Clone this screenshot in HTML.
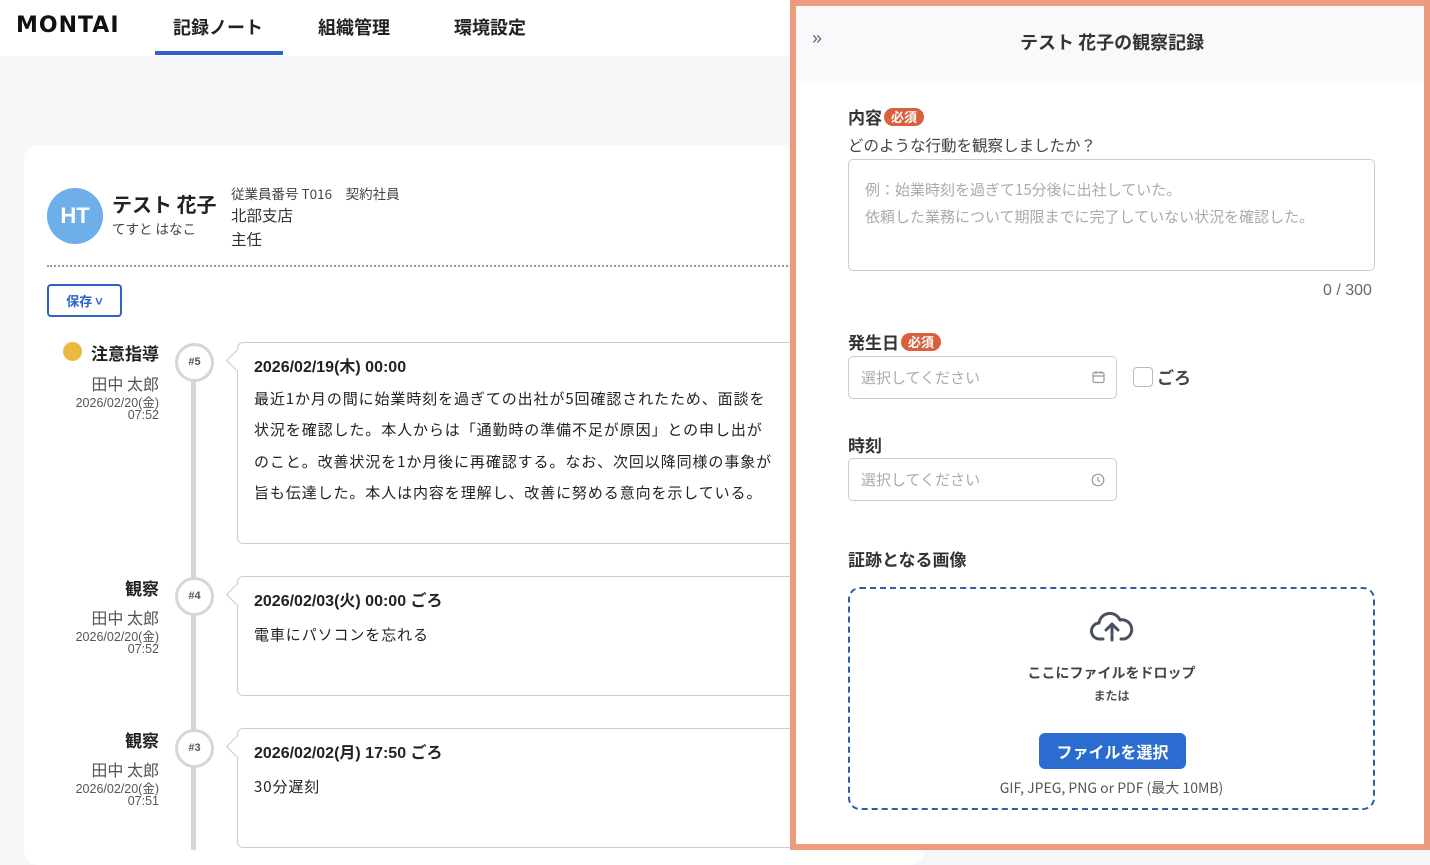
<!DOCTYPE html>
<html><head><meta charset="utf-8"><style>
*{box-sizing:border-box;margin:0;padding:0}
body{width:1430px;height:850px;overflow:hidden;background:#f6f7f9;font-family:"Liberation Sans","Noto Sans CJK JP",sans-serif;color:#222;position:relative}
.jp{font-family:"Noto Sans CJK JP",sans-serif}
.nav{position:absolute;left:0;top:0;width:1430px;height:56px;background:#fff}
.logo{position:absolute;left:16px;top:13px;font-size:22px;font-weight:bold;letter-spacing:1px;color:#111;font-family:"DejaVu Sans","Liberation Sans",sans-serif}
.tab{position:absolute;top:14px;font-size:18px;font-weight:bold;color:#222}
.uline{position:absolute;left:155px;top:51px;width:128px;height:4px;background:#2d63c8}
.card{position:absolute;left:24px;top:145px;width:900px;height:720px;background:#fff;border-radius:14px}
.av{position:absolute;left:47px;top:188px;width:56px;height:56px;border-radius:50%;background:#6eaee9;color:#fff;font-weight:bold;font-size:22px;text-align:center;line-height:56px}
.abs{position:absolute;white-space:nowrap}
.dots{position:absolute;left:47px;top:265px;width:745px;border-top:2px dotted #999}
.save{position:absolute;left:47px;top:284px;width:75px;height:33px;border:2px solid #2d63c8;border-radius:4px;color:#2d63c8;font-size:13px;font-weight:bold;text-align:center;line-height:29px}
.line{position:absolute;left:191px;top:360px;width:5px;height:490px;background:#d4d6dc}
.num{position:absolute;left:175px;width:39px;height:39px;border-radius:50%;border:3px solid #d4d6dc;background:#fff;font-size:11px;font-weight:bold;color:#555;text-align:center;line-height:33px}
.box{position:absolute;left:237px;width:600px;border:1.5px solid #c9ccd2;border-radius:6px;background:#fff}
.box:before{content:"";position:absolute;left:-9px;top:10px;width:14px;height:14px;background:#fff;border-left:1.5px solid #c9ccd2;border-bottom:1.5px solid #c9ccd2;transform:rotate(45deg)}
.bt{position:absolute;left:16px;top:10px;font-size:16px;font-weight:bold;white-space:nowrap}
.bd{position:absolute;left:16px;top:40px;font-size:15px;line-height:31.3px;white-space:nowrap;color:#222;letter-spacing:0.9px}
.type{position:absolute;right:1271px;font-size:17px;font-weight:bold;text-align:right}
.who{position:absolute;right:1271px;font-size:16px;color:#555;text-align:right}
.ts{position:absolute;right:1271px;font-size:12.5px;color:#555;text-align:right;line-height:12px}
.panel{position:absolute;left:790px;top:0;width:640px;height:850px;border:6px solid #ec9b7d;background:#fff}
.ph{position:absolute;left:0;top:0;width:628px;height:75px;background:#f7f9fb}
.lbl{position:absolute;left:52px;font-size:17px;font-weight:bold;color:#333}
.req{display:inline-block;background:#d9603e;color:#fff;font-size:13px;border-radius:9px;padding:0 7px;line-height:18px;vertical-align:2px;margin-left:2px}
.inp{position:absolute;left:52px;border:1.5px solid #c9ccd2;border-radius:5px;background:#fff}
.ph1{color:#aaa;font-size:15px}
</style></head><body>
<div class="nav">
<div class="logo">MONTAI</div>
<div class="tab jp" style="left:173px">記録ノート</div>
<div class="tab jp" style="left:318px">組織管理</div>
<div class="tab jp" style="left:454px">環境設定</div>
<div class="uline"></div>
</div>
<div class="card"></div>
<div class="av">HT</div>
<div class="abs jp" style="left:112px;top:189px;font-size:20px;font-weight:bold">テスト 花子</div>
<div class="abs jp" style="left:112px;top:218px;font-size:13.5px;color:#444">てすと はなこ</div>
<div class="abs jp" style="left:231px;top:183px;font-size:13.5px;color:#444">従業員番号 T016　契約社員</div>
<div class="abs jp" style="left:231px;top:204px;font-size:15.5px;color:#333">北部支店</div>
<div class="abs jp" style="left:231px;top:228px;font-size:15.5px;color:#333">主任</div>
<div class="dots"></div>
<div class="save jp">保存 ˅</div>
<div class="line"></div>

<div class="abs" style="left:63px;top:342px;width:19px;height:19px;border-radius:50%;background:#e9bb3c"></div>
<div class="type jp" style="top:340px">注意指導</div>
<div class="who jp" style="top:371px">田中 太郎</div>
<div class="ts" style="top:397px">2026/02/20(金)<br>07:52</div>
<div class="num" style="top:343px">#5</div>
<div class="box" style="top:342px;height:202px"><div class="bt">2026/02/19(木) 00:00</div><div class="bd jp">最近1か月の間に始業時刻を過ぎての出社が5回確認されたため、面談を<br>状況を確認した。本人からは「通勤時の準備不足が原因」との申し出が<br>のこと。改善状況を1か月後に再確認する。なお、次回以降同様の事象が<br>旨も伝達した。本人は内容を理解し、改善に努める意向を示している。</div></div>

<div class="type jp" style="top:575px">観察</div>
<div class="who jp" style="top:605px">田中 太郎</div>
<div class="ts" style="top:631px">2026/02/20(金)<br>07:52</div>
<div class="num" style="top:577px">#4</div>
<div class="box" style="top:576px;height:120px"><div class="bt">2026/02/03(火) 00:00 ごろ</div><div class="bd jp" style="top:42px">電車にパソコンを忘れる</div></div>

<div class="type jp" style="top:727px">観察</div>
<div class="who jp" style="top:757px">田中 太郎</div>
<div class="ts" style="top:783px">2026/02/20(金)<br>07:51</div>
<div class="num" style="top:729px">#3</div>
<div class="box" style="top:728px;height:120px"><div class="bt">2026/02/02(月) 17:50 ごろ</div><div class="bd jp" style="top:42px">30分遅刻</div></div>

<div class="panel">
<div class="ph">
<div class="abs" style="left:16px;top:22px;font-size:18px;color:#667">»</div>
<div class="abs jp" style="left:224px;top:23px;font-size:18px;font-weight:bold;color:#333">テスト 花子の観察記録</div>
</div>
<div class="lbl jp" style="top:98px">内容<span class="req">必須</span></div>
<div class="abs jp" style="left:52px;top:128px;font-size:15.5px;color:#444">どのような行動を観察しましたか？</div>
<div class="inp" style="top:153px;width:527px;height:112px"><div class="abs jp ph1" style="left:16px;top:16px;line-height:27px">例：始業時刻を過ぎて15分後に出社していた。<br>依頼した業務について期限までに完了していない状況を確認した。</div></div>
<div class="abs" style="left:527px;top:276px;font-size:16px;color:#666">0 / 300</div>
<div class="lbl jp" style="top:323px">発生日<span class="req">必須</span></div>
<div class="inp" style="top:350px;width:269px;height:43px"><div class="abs jp ph1" style="left:12px;top:10px">選択してください</div>
<svg class="abs" style="left:243px;top:13px" width="13" height="14" viewBox="0 0 13 14" fill="none" stroke="#999" stroke-width="1.2"><rect x="1" y="2.5" width="11" height="10" rx="1.5"/><path d="M1 6h11M4 1v3M9 1v3"/></svg></div>
<div class="abs" style="left:337px;top:361px;width:20px;height:20px;border:1.5px solid #bbb;border-radius:4px"></div>
<div class="abs jp" style="left:361px;top:358px;font-size:17px;font-weight:bold;color:#444">ごろ</div>
<div class="lbl jp" style="top:426px">時刻</div>
<div class="inp" style="top:452px;width:269px;height:43px"><div class="abs jp ph1" style="left:12px;top:10px">選択してください</div>
<svg class="abs" style="left:242px;top:14px" width="14" height="14" viewBox="0 0 14 14" fill="none" stroke="#999" stroke-width="1.2"><circle cx="7" cy="7" r="5.8"/><path d="M7 4v3.3l2 1.5"/></svg></div>
<div class="lbl jp" style="top:540px">証跡となる画像</div>
<div class="abs" style="left:52px;top:581px;width:527px;height:223px;border:2px dashed #2b5fa6;border-radius:12px">
<svg class="abs" style="left:240px;top:20px" width="44" height="34" viewBox="0 0 44 34" fill="none" stroke="#4a5060" stroke-width="3" stroke-linecap="round" stroke-linejoin="round"><path d="M13 30H10a8 8 0 0 1-1-16 11 11 0 0 1 21-3 8 8 0 0 1 4 19h-3"/><path d="M22 31V15M16 21l6-6 6 6"/></svg>
<div class="abs jp" style="left:0;width:523px;text-align:center;top:74px;font-size:14px;font-weight:bold;color:#444">ここにファイルをドロップ</div>
<div class="abs jp" style="left:0;width:523px;text-align:center;top:98px;font-size:12px;font-weight:bold;color:#555">または</div>
<div class="abs jp" style="left:189px;top:144px;width:147px;height:36px;background:#2a6ccf;border-radius:6px;color:#fff;font-size:16px;font-weight:bold;text-align:center;line-height:36px">ファイルを選択</div>
<div class="abs jp" style="left:0;width:523px;text-align:center;top:189px;font-size:14px;color:#555">GIF, JPEG, PNG or PDF (最大 10MB)</div>
</div>
</div>
</body></html>
